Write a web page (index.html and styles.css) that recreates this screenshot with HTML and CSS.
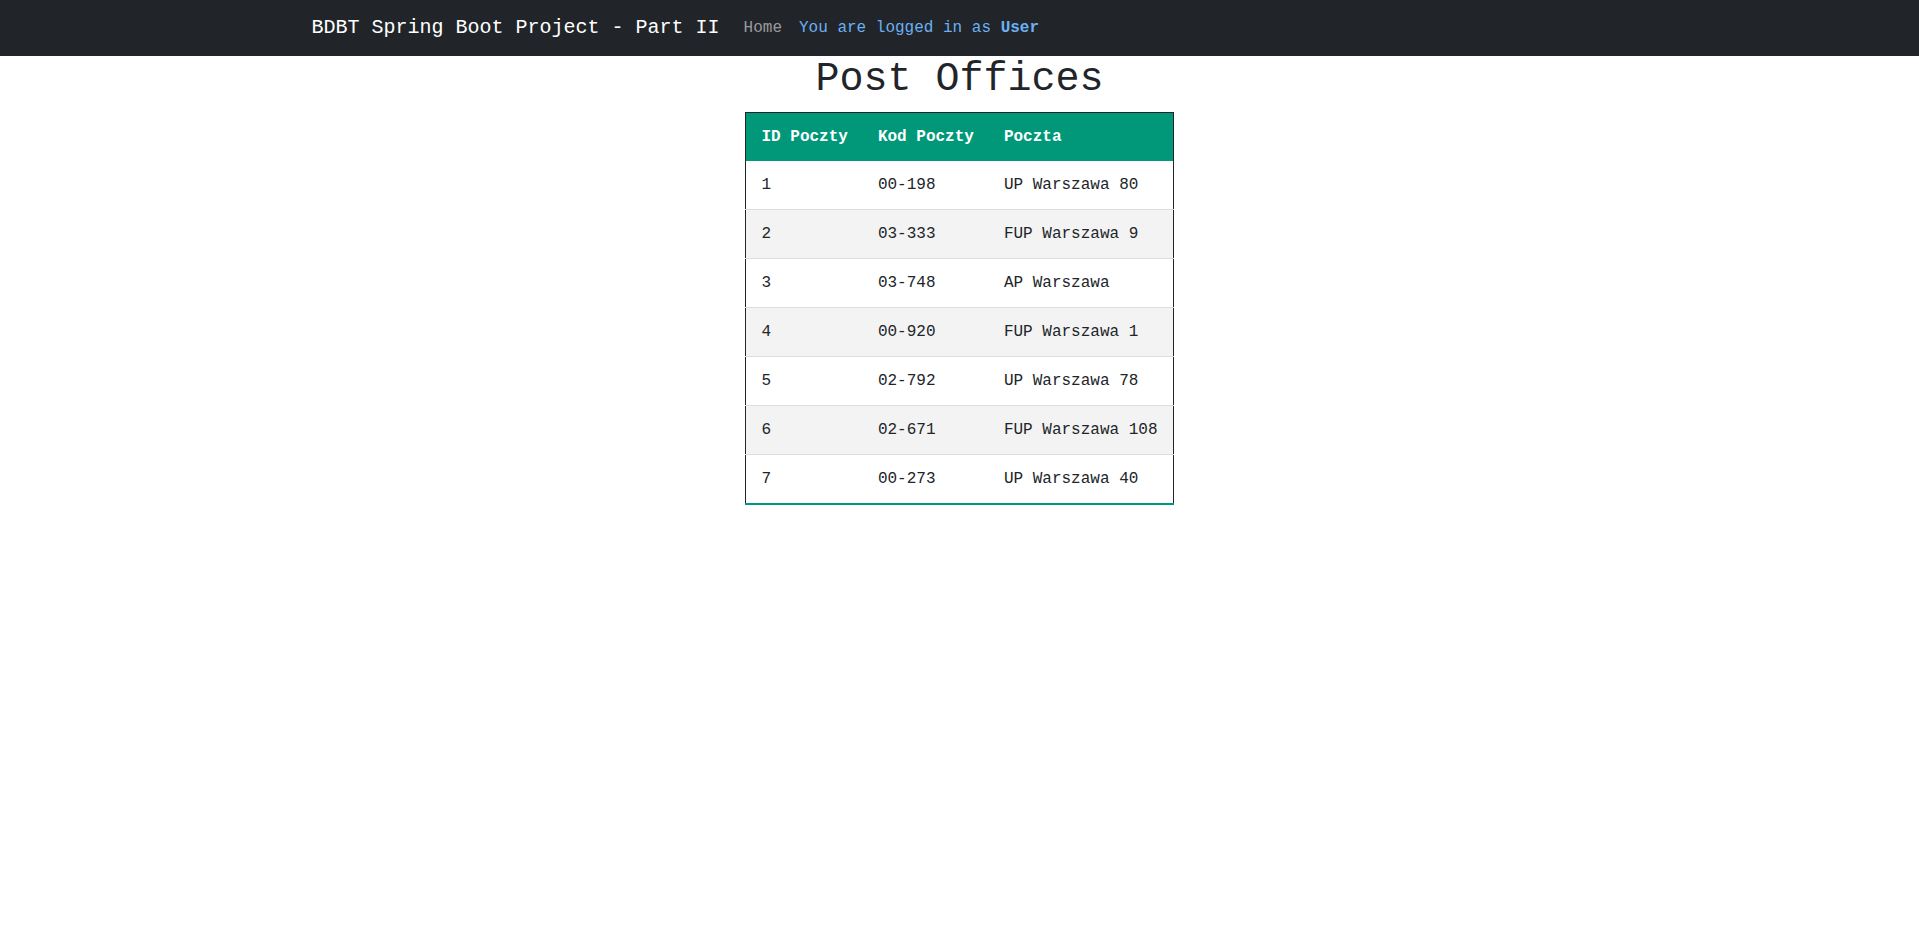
FILE: index.html
```html
<!DOCTYPE html>
<html lang="pl">
<head>
<meta charset="utf-8">
<title>Post Offices</title>
<link rel="stylesheet" href="styles.css">
</head>
<body>
<nav class="navbar">
  <div class="container">
    <a class="brand" href="#">BDBT Spring Boot Project - Part II</a>
    <ul class="nav">
      <li><a class="nav-link" href="#">Home</a></li>
      <li><span class="nav-user">You are logged in as <b>User</b></span></li>
    </ul>
  </div>
</nav>
<main class="main">
  <h1 class="title">Post Offices</h1>
  <table class="styled-table">
    <thead>
      <tr><th>ID Poczty</th><th>Kod Poczty</th><th>Poczta</th></tr>
    </thead>
    <tbody>
      <tr><td>1</td><td>00-198</td><td>UP Warszawa 80</td></tr>
      <tr><td>2</td><td>03-333</td><td>FUP Warszawa 9</td></tr>
      <tr><td>3</td><td>03-748</td><td>AP Warszawa</td></tr>
      <tr><td>4</td><td>00-920</td><td>FUP Warszawa 1</td></tr>
      <tr><td>5</td><td>02-792</td><td>UP Warszawa 78</td></tr>
      <tr><td>6</td><td>02-671</td><td>FUP Warszawa 108</td></tr>
      <tr><td>7</td><td>00-273</td><td>UP Warszawa 40</td></tr>
    </tbody>
  </table>
</main>
</body>
</html>
```

FILE: styles.css
```css
* { box-sizing: border-box; }
html, body {
  margin: 0;
  padding: 0;
  background: #fff;
}
body {
  font-family: "Liberation Mono", "Courier New", monospace;
  font-size: 16px;
  line-height: 1.5;
  color: #212529;
}
.navbar {
  background: #212529;
  padding: 8px 0;
}
.container {
  max-width: 1320px;
  margin: 0 auto;
  padding: 0 12px;
  display: flex;
  align-items: center;
}
.brand {
  font-size: 20px;
  line-height: 1.5;
  padding: 5px 0;
  margin-right: 16px;
  color: #fff;
  text-decoration: none;
  white-space: nowrap;
}
.nav {
  list-style: none;
  margin: 0;
  padding: 0;
  display: flex;
  align-items: center;
  gap: 1px;
}
.nav-link {
  display: block;
  padding: 8px;
  color: rgba(255, 255, 255, 0.55);
  text-decoration: none;
}
.nav-user {
  display: block;
  padding: 8px;
  color: #6cb0f3;
}
.nav-user b { font-weight: 700; }
.main {
  display: flex;
  flex-direction: column;
  align-items: center;
}
.title {
  font-size: 40px;
  font-weight: 400;
  line-height: 1.2;
  margin: 0 0 8px;
  text-align: center;
}
.styled-table {
  border-collapse: collapse;
  border: 1px solid #212529;
  font-size: 16px;
}
.styled-table thead tr {
  background: #009879;
  color: #fff;
  text-align: left;
}
.styled-table th,
.styled-table td {
  padding: 12px 15px;
  white-space: nowrap;
}
.styled-table th { font-weight: 700; }
.styled-table tbody tr { border-bottom: 1px solid #dddddd; }
.styled-table tbody tr:nth-of-type(even) { background: #f3f3f3; }
.styled-table tbody tr:last-of-type { border-bottom: 2px solid #009879; }
```
